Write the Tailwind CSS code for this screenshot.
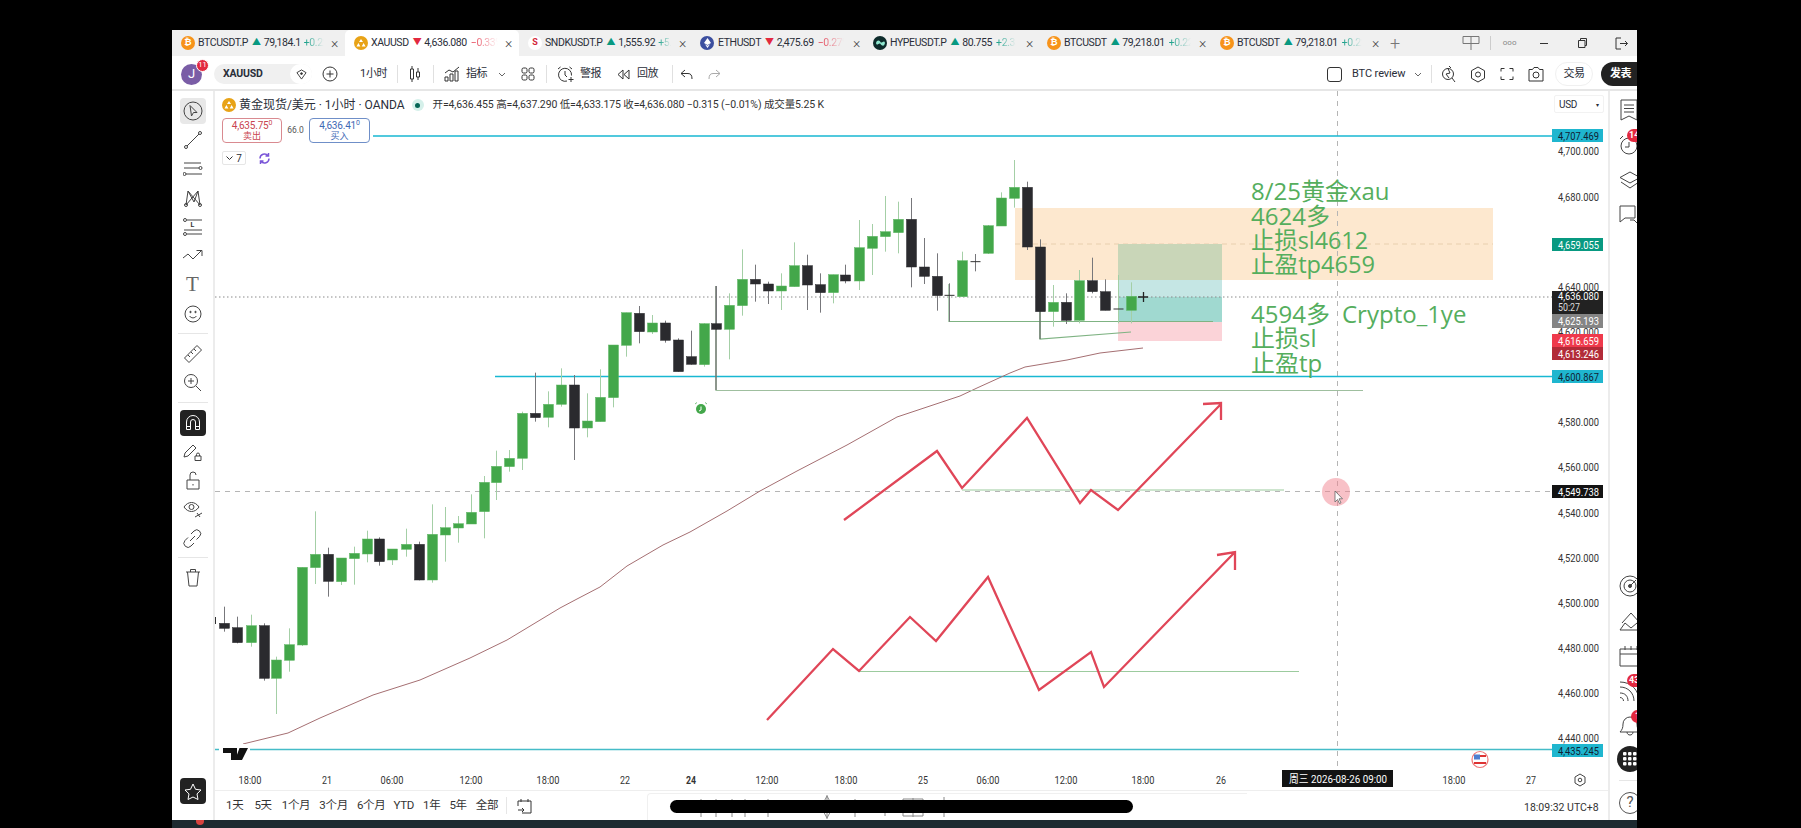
<!DOCTYPE html>
<html lang="en">
<head>
    <meta charset="UTF-8">
    <title>XAUUSD 4,636.080</title>
    <script src="https://cdn.jsdelivr.net/npm/@tailwindcss/browser@4"></script>
</head>
<body class="bg-black w-[1801px] h-[828px] overflow-hidden font-['Roboto','Noto_Sans_CJK_SC',sans-serif] text-[#2a2e39]">
<div class="ml-[172px] mt-[30px] w-[1465px] h-[798px] overflow-hidden flex flex-col bg-white">

    <!-- tabs -->
    <div class="h-[26px] shrink-0 flex items-center bg-[#f0f0f0] text-[10.5px] tracking-[-0.4px] whitespace-nowrap">
        <div class="w-[173px] h-full flex items-center pl-[9px]">
            <span class="w-[14px] h-[14px] rounded-full bg-[#f7931a] text-white text-[9px] font-bold flex items-center justify-center tracking-normal">₿</span>
            <span class="ml-[3px]">BTCUSDT.P</span>
            <span class="ml-[4px] text-[#089981] text-[9px]">▲</span>
            <span class="ml-[3px]">79,184.1</span>
            <span class="ml-[3px] w-[20px] overflow-hidden bg-linear-to-r from-[#089981] to-transparent bg-clip-text text-transparent">+0.22%</span>
            <span class="ml-auto mr-[7px] text-[14px] font-light text-[#444]">×</span>
        </div>
        <div class="w-[174px] h-full flex items-center pl-[9px] bg-white rounded-t-[5px]">
            <span class="w-[14px] h-[14px] rounded-full bg-[#e8a317] flex items-center justify-center"><svg width="10" height="8" viewBox="0 0 10 8" fill="#fff"><path d="M5 0l2 3H3zM2.400 4l2 3.400H0.500zM7.600 4l2 3.400H5.700z"/></svg></span>
            <span class="ml-[3px]">XAUUSD</span>
            <span class="ml-[4px] text-[#e2293f] text-[9px]">▼</span>
            <span class="ml-[3px]">4,636.080</span>
            <span class="ml-[4px] w-[27px] overflow-hidden bg-linear-to-r from-[#e2293f] to-transparent bg-clip-text text-transparent">−0.33%</span>
            <span class="ml-auto mr-[7px] text-[14px] font-light text-[#444]">×</span>
        </div>
        <div class="w-[174px] h-full flex items-center pl-[9px]">
            <span class="w-[14px] h-[14px] rounded-full bg-white text-[#d3263a] text-[9px] font-bold flex items-center justify-center tracking-normal">S</span>
            <span class="ml-[3px]">SNDKUSDT.P</span>
            <span class="ml-[4px] text-[#089981] text-[9px]">▲</span>
            <span class="ml-[3px]">1,555.92</span>
            <span class="ml-[3px] w-[13px] overflow-hidden bg-linear-to-r from-[#089981] to-transparent bg-clip-text text-transparent">+5.1%</span>
            <span class="ml-auto mr-[7px] text-[14px] font-light text-[#444]">×</span>
        </div>
        <div class="w-[174px] h-full flex items-center pl-[7px]">
            <span class="w-[14px] h-[14px] rounded-full bg-[#3c4f9f] flex items-center justify-center"><svg width="7" height="10" viewBox="0 0 7 10" fill="#fff"><path d="M3.500 0L7 5 3.500 7 0 5zM3.500 7.800L6 6.300 3.500 10 1 6.300z"/></svg></span>
            <span class="ml-[4px]">ETHUSDT</span>
            <span class="ml-[4px] text-[#e2293f] text-[9px]">▼</span>
            <span class="ml-[3px]">2,475.69</span>
            <span class="ml-[4px] w-[26px] overflow-hidden bg-linear-to-r from-[#e2293f] to-transparent bg-clip-text text-transparent">−0.27%</span>
            <span class="ml-auto mr-[7px] text-[14px] font-light text-[#444]">×</span>
        </div>
        <div class="w-[173px] h-full flex items-center pl-[6px]">
            <span class="w-[14px] h-[14px] rounded-full bg-[#0d2b2b] flex items-center justify-center"><svg width="9" height="6" viewBox="0 0 9 6" fill="#8fe8d0"><path d="M0 3c1-3 3-3 4.500-1S8-1 9 3C8 7 6 6 4.500 4S1 7 0 3z"/></svg></span>
            <span class="ml-[3px]">HYPEUSDT.P</span>
            <span class="ml-[4px] text-[#089981] text-[9px]">▲</span>
            <span class="ml-[3px]">80.755</span>
            <span class="ml-[4px] w-[20px] overflow-hidden bg-linear-to-r from-[#089981] to-transparent bg-clip-text text-transparent">+2.35%</span>
            <span class="ml-auto mr-[7px] text-[14px] font-light text-[#444]">×</span>
        </div>
        <div class="w-[173px] h-full flex items-center pl-[7px]">
            <span class="w-[14px] h-[14px] rounded-full bg-[#f7931a] text-white text-[9px] font-bold flex items-center justify-center tracking-normal">₿</span>
            <span class="ml-[3px]">BTCUSDT</span>
            <span class="ml-[4px] text-[#089981] text-[9px]">▲</span>
            <span class="ml-[3px]">79,218.01</span>
            <span class="ml-[4px] w-[22px] overflow-hidden bg-linear-to-r from-[#089981] to-transparent bg-clip-text text-transparent">+0.22%</span>
            <span class="ml-auto mr-[7px] text-[14px] font-light text-[#444]">×</span>
        </div>
        <div class="w-[173px] h-full flex items-center pl-[7px]">
            <span class="w-[14px] h-[14px] rounded-full bg-[#f7931a] text-white text-[9px] font-bold flex items-center justify-center tracking-normal">₿</span>
            <span class="ml-[3px]">BTCUSDT</span>
            <span class="ml-[4px] text-[#089981] text-[9px]">▲</span>
            <span class="ml-[3px]">79,218.01</span>
            <span class="ml-[4px] w-[20px] overflow-hidden bg-linear-to-r from-[#089981] to-transparent bg-clip-text text-transparent">+0.22%</span>
            <span class="ml-auto mr-[7px] text-[14px] font-light text-[#444]">×</span>
        </div>
        <span class="ml-[4px] text-[18px] font-light text-[#777]">+</span>
        <svg class="ml-[62px]" width="18" height="16" viewBox="0 0 18 16" fill="none" stroke="#777"><path d="M1 1.500h16v7H1zM9 1.500V15"/></svg>
        <span class="ml-[10px] w-px h-[14px] bg-[#ccc]"></span>
        <span class="ml-[12px] text-[8px] text-[#888] tracking-normal">ooo</span>
        <span class="ml-[24px] w-[8px] h-px bg-[#333]"></span>
        <svg class="ml-[29px]" width="10" height="10" viewBox="0 0 10 10" fill="none" stroke="#333"><path d="M1.500 2.500h6.500v7H1.500zM3.500 2.500V.5H9.500v7H8"/></svg>
        <svg class="ml-[28px]" width="13" height="13" viewBox="0 0 13 13" fill="none" stroke="#333"><path d="M6 1H1v11h5M5 6.500h7.500M10 4l2.500 2.500L10 9"/></svg>
    </div>

    <!-- top toolbar -->
    <div class="h-[35px] w-[1465px] pt-[3px] shrink-0 flex items-center text-[11px] border-b-[2px] border-[#e6e6e6] whitespace-nowrap [&>*]:shrink-0">
        <div class="relative ml-[9px] w-[21px] h-[21px] rounded-full bg-[#7a5da6] text-white text-[13px] flex items-center justify-center">J
            <span class="absolute -top-[5px] -right-[7px] w-[13px] h-[13px] rounded-full bg-[#e2293f] border border-white text-[7.500px] flex items-center justify-center">11</span>
        </div>
        <div class="ml-[12px] w-[98px] h-[20px] rounded-full bg-[#f0f0f0] flex items-center pl-[9px] font-bold text-[10.5px] tracking-[-0.2px]">XAUUSD
            <span class="ml-auto w-[22px] h-[20px] rounded-full bg-white flex items-center justify-center"><svg width="11" height="11" viewBox="0 0 12 12" fill="none" stroke="#333"><path d="M1 4l5-3 5 3-5 7z"/><circle cx="6" cy="5" r="1" fill="#333"/></svg></span>
        </div>
        <svg class="ml-[10px]" width="16" height="16" viewBox="0 0 16 16" fill="none" stroke="#333"><circle cx="8" cy="8" r="7"/><path d="M8 4.500v7M4.500 8h7"/></svg>
        <span class="ml-[22px] w-[25px] tracking-[-0.3px]">1小时</span>
        <span class="ml-[12px] w-px h-[18px] bg-[#e0e0e0]"></span>
        <svg class="ml-[11px]" width="12" height="16" viewBox="0 0 12 16" fill="none" stroke="#333"><path d="M3 0v3M3 13v3M9 2v4M9 11v3M1.500 3h3v10h-3zM7.500 6h3v5h-3z"/></svg>
        <span class="ml-[12px] w-px h-[18px] bg-[#e0e0e0]"></span>
        <svg class="ml-[10px]" width="16" height="16" viewBox="0 0 16 16" fill="none" stroke="#333"><path d="M1 15v-4h3v4zM6 15V8h3v7zM11 15V5h3v10zM1 7l4-3 4 2 6-5"/></svg>
        <span class="ml-[6px] w-[21px] tracking-[-0.5px]">指标</span>
        <svg class="ml-[11px]" width="8" height="5" viewBox="0 0 8 5" fill="none" stroke="#666"><path d="M1 1l3 3 3-3"/></svg>
        <svg class="ml-[15px]" width="14" height="14" viewBox="0 0 14 14" fill="none" stroke="#333"><rect x="1" y="1" width="5" height="5" rx="1.500"/><rect x="8" y="1" width="5" height="5" rx="1.500"/><rect x="1" y="8" width="5" height="5" rx="1.500"/><rect x="8" y="8" width="5" height="5" rx="1.500"/></svg>
        <span class="ml-[11px] w-px h-[18px] bg-[#e0e0e0]"></span>
        <svg class="ml-[10px]" width="17" height="17" viewBox="0 0 17 17" fill="none" stroke="#333"><path d="M10 15A6.500 6.500 0 1 1 14.500 9.500M8 5v4l2 2M1 3l2.500-2M15 3l-2.500-2M14 11v5M11.500 13.500h5"/></svg>
        <span class="ml-[6px] w-[21px] tracking-[-0.5px]">警报</span>
        <svg class="ml-[16px]" width="13" height="11" viewBox="0 0 13 11" fill="none" stroke="#333"><path d="M6 1L1 5.500 6 10zM12 1L7 5.500l5 4.500z"/></svg>
        <span class="ml-[7px] w-[21px] tracking-[-0.5px]">回放</span>
        <span class="ml-[14px] w-px h-[18px] bg-[#e0e0e0]"></span>
        <svg class="ml-[7px]" width="13" height="11" viewBox="0 0 13 11" fill="none" stroke="#333"><path d="M5 1L1 4.500 5 8M1 4.500h7c3 0 4 2 4 5.500"/></svg>
        <svg class="ml-[15px]" width="13" height="11" viewBox="0 0 13 11" fill="none" stroke="#aaa"><path d="M8 1l4 3.500L8 8M12 4.500H5c-3 0-4 2-4 5.500"/></svg>

        <span class="ml-auto w-[15px] h-[15px] rounded-[3px] border border-[#333]"></span>
        <span class="ml-[10px] w-[53px] tracking-[-0.1px]">BTC review</span>
        <svg class="ml-[9px]" width="8" height="5" viewBox="0 0 8 5" fill="none" stroke="#666"><path d="M1 1l3 3 3-3"/></svg>
        <span class="ml-[9px] w-px h-[18px] bg-[#e0e0e0]"></span>
        <svg class="ml-[9px]" width="16" height="18" viewBox="0 0 16 18" fill="none" stroke="#333"><circle cx="7" cy="9" r="5.500"/><path d="M7 3.500L9 8 5 9l3 4M11 13l3 4M8 1l2 2"/></svg>
        <svg class="ml-[13px]" width="16" height="17" viewBox="0 0 16 17" fill="none" stroke="#333"><path d="M8 1l6.500 3.700v7.600L8 16l-6.500-3.700V4.700z"/><circle cx="8" cy="8.500" r="2.500"/></svg>
        <svg class="ml-[14px]" width="14" height="14" viewBox="0 0 14 14" fill="none" stroke="#333"><path d="M1 4.500V1.500h3.500M9.500 1.500H13v3M13 9.500v3H9.500M4.500 12.500H1v-3"/></svg>
        <svg class="ml-[14px]" width="16" height="16" viewBox="0 0 16 16" fill="none" stroke="#333"><path d="M1 3.500h3.500L6 1.500h4l1.500 2H15V15H1z"/><circle cx="8" cy="9" r="3"/></svg>
        <span class="ml-[11px] w-[38px] h-[24px] rounded-full border border-[#f0f0f0] flex items-center justify-center tracking-[-0.5px]">交易</span>
        <span class="ml-[8px] w-[36px] h-[24px] rounded-l-full bg-[#222] text-white font-bold flex items-center pl-[9px] tracking-[-0.5px]">发表</span>
    </div>

    <!-- main row -->
    <div class="flex flex-1 w-[1474px] min-h-0">
        <!-- left drawing tools -->
        <div class="w-[43px] shrink-0 flex flex-col items-center pt-[5px] pb-[16px] border-r-[2px] border-[#ececec] text-[#333]">
            <div class="w-[26px] h-[26px] my-[1.500px] rounded-[4px] bg-[#e8e8e8] flex items-center justify-center"><svg width="20" height="20" viewBox="0 0 20 20" fill="none" stroke="#444"><circle cx="10" cy="10" r="9"/><path d="M7 4.500l7 7-3.500 0 -2 3.500z"/></svg></div>
            <div class="h-[29px] flex items-center"><svg width="20" height="20" viewBox="0 0 20 20" fill="none" stroke="#444"><path d="M4 16L16 4"/><circle cx="3" cy="17" r="1.500"/><circle cx="17" cy="3" r="1.500"/></svg></div>
            <div class="h-[29px] flex items-center"><svg width="20" height="16" viewBox="0 0 20 16" fill="none" stroke="#444"><path d="M1 2h17M1 7h15M3 13h16"/><circle cx="17.500" cy="7" r="1.500"/><circle cx="1.500" cy="13" r="1.500"/></svg></div>
            <div class="h-[29px] flex items-center"><svg width="20" height="20" viewBox="0 0 20 20" fill="none" stroke="#444"><path d="M3 17L5 3l6 11 4-11 2 14M3 17L15 3M5 3l12 14"/><circle cx="3" cy="17" r="1.500"/><circle cx="17" cy="17" r="1.500"/></svg></div>
            <div class="h-[29px] relative flex items-center"><svg width="20" height="18" viewBox="0 0 20 18" fill="none" stroke="#444"><path d="M4 2h15M1 12h18M4 16h15"/><circle cx="2" cy="2" r="1.500"/><circle cx="2" cy="16" r="1.500"/></svg><span class="absolute left-[8px] top-[8px] text-[7px] font-bold">L</span></div>
            <div class="h-[29px] flex items-center"><svg width="21" height="14" viewBox="0 0 21 14" fill="none" stroke="#444"><path d="M1 9l5-4 5 5 8-8M14.500 1.500H20V7"/></svg></div>
            <div class="h-[29px] flex items-center font-['Liberation_Serif',serif] text-[21px] text-[#666]">T</div>
            <div class="h-[29px] flex items-center"><svg width="18" height="18" viewBox="0 0 18 18" fill="none" stroke="#444"><circle cx="9" cy="9" r="8"/><circle cx="6.500" cy="7" r=".7" fill="#444"/><circle cx="11.500" cy="7" r=".7" fill="#444"/><path d="M5.500 11c2 2.500 5 2.500 7 0"/></svg></div>
            <div class="my-[5px] w-[30px] h-px bg-[#e6e6e6]"></div>
            <div class="h-[29px] flex items-center"><svg width="20" height="20" viewBox="0 0 20 20" fill="none" stroke="#444"><path d="M1.500 14L14 1.500l4.500 4.500L6 18.500zM5 11l2 2M8 8l2 2M11 5l2 2"/></svg></div>
            <div class="h-[29px] flex items-center"><svg width="19" height="19" viewBox="0 0 19 19" fill="none" stroke="#444"><circle cx="8" cy="8" r="6.500"/><path d="M13 13l5 5M8 5v6M5 8h6"/></svg></div>
            <div class="my-[5px] w-[30px] h-px bg-[#e6e6e6]"></div>
            <div class="w-[26px] h-[26px] my-[1.500px] rounded-[4px] bg-[#222] flex items-center justify-center"><svg width="16" height="17" viewBox="0 0 16 17" fill="none" stroke="#fff"><path d="M1.500 15.500V8a6.500 6.500 0 0 1 13 0v7.500h-4V8a2.500 2.500 0 0 0-5 0v7.500zM1.500 12.500h4M10.500 12.500h4"/></svg></div>
            <div class="h-[29px] flex items-center"><svg width="20" height="20" viewBox="0 0 20 20" fill="none" stroke="#444"><path d="M2 11L10 3l3 3-8 8-4 1zM12 17v-3h6v4.500h-6zM13.500 14v-1.500a1.500 1.500 0 0 1 3 0V14"/></svg></div>
            <div class="h-[29px] flex items-center"><svg width="16" height="20" viewBox="0 0 16 20" fill="none" stroke="#444"><path d="M2 9h12v9H2zM5 9V4a3 3 0 0 1 6 0M8 13v1.500"/></svg></div>
            <div class="h-[29px] flex items-center"><svg width="20" height="20" viewBox="0 0 20 20" fill="none" stroke="#444"><path d="M1 7c4-6 11-6 15 0-4 6-11 6-15 0z"/><circle cx="8.500" cy="7" r="2.500"/><path d="M12 17l7-4M14 13l3 4"/></svg></div>
            <div class="h-[29px] flex items-center"><svg width="19" height="19" viewBox="0 0 19 19" fill="none" stroke="#444"><path d="M8 5l3-3a3.500 3.500 0 0 1 5.500 5.500l-3 3M11 14l-3 3A3.500 3.500 0 0 1 2 11.500l3-3M7 12l5-5"/></svg></div>
            <div class="mt-[4px] mb-[5px] w-[30px] h-px bg-[#e6e6e6]"></div>
            <div class="h-[29px] flex items-center"><svg width="16" height="19" viewBox="0 0 16 19" fill="none" stroke="#444"><path d="M1 4h14M5.500 4V1.500h5V4M2.500 4l1.500 14h8l1.500-14"/></svg></div>
            <div class="mt-auto w-[26px] h-[26px] rounded-[4px] bg-[#222] flex items-center justify-center"><svg width="18" height="17" viewBox="0 0 18 17" fill="none" stroke="#fff"><path d="M9 1l2.500 5.300 5.500.7-4 3.900 1 5.600L9 14l-5 2.500 1-5.600-4-3.900 5.500-.7z"/></svg></div>
        </div>

        <!-- chart column -->
        <div class="flex-1 min-w-0 flex flex-col">
            <div class="relative h-[700px] shrink-0 border-b border-[#eeeeee]">
                <svg id="chart" width="1391" height="700" viewBox="215 91 1391 700" class="block">
                    <!-- zones, lower layer -->
                    <rect x="1015" y="208" width="478" height="72" fill="#fde8cf"/>
                    <path d="M1015 244H1493" stroke="#e8cfae" stroke-dasharray="5 4"/>
                    <rect x="1118" y="244" width="104" height="36" fill="#c9d6b8"/>
                    <rect x="1118" y="280" width="104" height="17" fill="#c5e6e4"/>
                    <rect x="1118" y="297" width="104" height="25" fill="#a0d9d0"/>
                    <rect x="1118" y="322" width="104" height="19" fill="#fbd3d8"/>
                    <!-- level lines -->
                    <path d="M215 297H1552" stroke="#8a8a8a" stroke-dasharray="1.500 2.500"/>
                    <path d="M215 491.500H1552" stroke="#b5b5b5" stroke-dasharray="5 5"/>
                    <path d="M1337.500 91V770" stroke="#b5b5b5" stroke-dasharray="5 5"/>
                    <path d="M373 136H1552M495 376.500H1552" stroke="#18b8d2" stroke-width="1.700"/>
                    <path d="M215 749.500H1552" stroke="#45bcc8" stroke-width="1.700"/>
                    <!-- moving average -->
                    <path d="M243 744L288 733L320 718L373 695L420 680L470 658L507 640L560 608L577 599L600 587L627 566L663 545L690 532L727 511L760 491L797 471L847 445L897 417L927 407L960 396L977 388L1010 373L1025 367L1067 360L1100 353L1143 348" fill="none" stroke="#a56f72" stroke-width="1" stroke-linejoin="round"/>
                    <!-- trend lines -->
                    <path d="M716 286V390.500H1363" fill="none" stroke="#9fbf9f" stroke-width="1.200"/>
                    <path d="M716 286V390" stroke="#555"/>
                    <path d="M949 284V321.500H1213" fill="none" stroke="#7fb383" stroke-width="1.200"/>
                    <path d="M1040 300V339L1131 332" fill="none" stroke="#7fb383" stroke-width="1.200"/>
                    <path d="M1040 300V339" stroke="#555"/>
                    <path d="M962 490H1284M859 671.500H1299" stroke="#9ccb9e" stroke-width="1.200"/>
                    <path d="M215.500 617v7" stroke="#333"/>
                    <g id="candles"></g>
                    <!-- hand drawn red zigzags -->
                    <path d="M844 520L937 451L962 488L1027 418L1080 503L1091 490L1118 510L1221 404M1203 404L1221 403V420" fill="none" stroke="#e04658" stroke-width="2.300"/>
                    <path d="M767 720L833 649L859 671L910 617L936 641L988 577L1039 690L1091 652L1104 687L1235 552M1217 555L1235 552V570" fill="none" stroke="#e04658" stroke-width="2.300"/>
                    <!-- notes -->
                    <g fill="#55ae5d" font-size="24" font-family="'Open Sans','Noto Sans CJK SC',sans-serif">
                        <text x="1251" y="200">8/25黄金xau</text>
                        <text x="1251" y="225">4624多</text>
                        <text x="1251" y="249" textLength="117" lengthAdjust="spacingAndGlyphs">止损sl4612</text>
                        <text x="1251" y="273" textLength="124" lengthAdjust="spacingAndGlyphs">止盈tp4659</text>
                        <text x="1251" y="323">4594多</text>
                        <text x="1342" y="323">Crypto_1ye</text>
                        <text x="1251" y="347">止损sl</text>
                        <text x="1251" y="372">止盈tp</text>
                    </g>
                    <!-- alert marker -->
                    <circle cx="701" cy="409" r="5" fill="#43a74a"/>
                    <path d="M701 406.500V410L699 411" fill="none" stroke="#fff"/>
                    <path d="M695 404l2-1.500M707 404l-2-1.500" stroke="#7cc082"/>
                    <!-- logo -->
                    <rect x="219" y="744" width="31" height="17" fill="#fff"/>
                    <path d="M223 748H237V760H231V753H223zM239.500 748H248L242 760H235z" fill="#111"/>
                    <!-- us flag event -->
                    <circle cx="1480" cy="759.500" r="8" fill="#fff" stroke="#e77" stroke-width="1.200"/>
                    <path d="M1474 756h12M1474 763h12" stroke="#d33" stroke-width="2"/>
                    <rect x="1474" y="754.500" width="6" height="5" fill="#4f7fd0"/>
                    <!-- axis labels -->
                    <g id="axis"></g>
                    <!-- pointer -->
                    <circle cx="1336" cy="492" r="14" fill="#f2838f" fill-opacity=".5"/>
                    <path d="M1335 491v11l2.500-2.500 2 4 1.500-.7-2-4h3.500z" fill="#fff" stroke="#666" stroke-width=".8"/>
                </svg>
                <div class="absolute left-[7px] top-[7px] flex items-center h-[14px]">
                    <span class="w-[14px] h-[14px] rounded-full bg-[#e8a317] flex items-center justify-center"><svg width="10" height="8" viewBox="0 0 10 8" fill="#fff"><path d="M5 0l2 3H3zM2.400 4l2 3.400H0.500zM7.600 4l2 3.400H5.700z"/></svg></span>
                    <span class="ml-[3px] text-[12px] tracking-[-0.02px]">黄金现货/美元 · 1小时 · OANDA</span>
                    <span class="ml-[7px] w-[12px] h-[12px] rounded-full bg-[#d5f0ea] flex items-center justify-center"><span class="w-[5px] h-[5px] rounded-full bg-[#056656]"></span></span>
                    <span class="ml-[9px] text-[10.5px] tracking-[-0.12px] text-[#333] whitespace-nowrap">开=4,636.455 高=4,637.290 低=4,633.175 收=4,636.080 −0.315 (−0.01%) 成交量5.25 K</span>
                </div>
                <div class="absolute left-[7px] top-[27px] flex items-center">
                    <div class="w-[60px] h-[25px] rounded-[4px] border border-[#d98a90] bg-white flex flex-col items-center justify-center text-[#c9444f] leading-[11px]">
                        <span class="text-[10px] tracking-[-0.2px]">4,635.75<sup class="text-[7px]">0</sup></span>
                        <span class="text-[9px]">卖出</span>
                    </div>
                    <span class="w-[27px] text-center text-[8.500px] text-[#555]">66.0</span>
                    <div class="w-[61px] h-[25px] rounded-[4px] border border-[#6f8fc8] bg-white flex flex-col items-center justify-center text-[#3f69b5] leading-[11px]">
                        <span class="text-[10px] tracking-[-0.2px]">4,636.41<sup class="text-[7px]">0</sup></span>
                        <span class="text-[9px]">买入</span>
                    </div>
                </div>
                <div class="absolute left-[7px] top-[60px] flex items-center">
                    <span class="w-[24px] h-[14px] rounded-[2px] border border-[#e6e6e6] flex items-center justify-center gap-[3px] text-[10px]"><svg width="7" height="4" viewBox="0 0 7 4" fill="none" stroke="#333"><path d="M.5.5l3 3 3-3"/></svg>7</span>
                    <svg class="ml-[12px]" width="13" height="13" viewBox="0 0 13 13" fill="none" stroke="#7a55d8"><path d="M2 6.500a4.500 4.500 0 0 1 8-2.800M11 6.500a4.500 4.500 0 0 1-8 2.800M10.500 1v3h-3M2.500 12V9h3" stroke-width="1.500"/></svg>
                </div>
                <div class="absolute left-[1339px] top-[4px] w-[50px] h-[18px] rounded-[2px] border border-[#f2f2f2] flex items-center pl-[4px] text-[10px] tracking-[-0.3px]">USD<span class="ml-auto mr-[4px] text-[6px]">▾</span></div>
            </div>
            <!-- range bar -->
            <div class="relative flex-1 flex items-center text-[11.500px] text-[#333] tracking-[-0.3px]">
                <span class="ml-[11px]">1天</span>
                <span class="ml-[11px]">5天</span>
                <span class="ml-[10px]">1个月</span>
                <span class="ml-[9px]">3个月</span>
                <span class="ml-[9px]">6个月</span>
                <span class="ml-[8px]">YTD</span>
                <span class="ml-[9px]">1年</span>
                <span class="ml-[9px]">5年</span>
                <span class="ml-[9px]">全部</span>
                <span class="ml-[8px] w-px h-[17px] bg-[#e6e6e6]"></span>
                <svg class="ml-[10px]" width="15" height="16" viewBox="0 0 15 16" fill="none" stroke="#333"><path d="M1 8V3h13v12H5M4 1v3M11 1v3M1 12h6M5 10l2 2-2 2"/></svg>
                <div class="absolute left-[432px] top-[2px] w-[600px] h-[27px] rounded-tl-[4px] border-l border-t border-[#f0f0f0]">
                    <svg width="600" height="27" viewBox="0 0 600 27" fill="none" stroke="#888">
                        <path d="M53 5v18M68 5v18M84 5v18M97 5v18M120 5v18M179 1v24M207 5v18M237 6v16M265 4v19M296 3v20"/>
                        <path d="M173 13l6-11 6 11-6 11zM255 5h20v17h-20z"/>
                    </svg>
                </div>
                <div class="absolute left-[455px] top-[9px] w-[463px] h-[13px] rounded-full bg-black"></div>
                <span class="absolute left-[1309px] top-[9px] text-[10.5px] tracking-[0px] whitespace-nowrap">18:09:32 UTC+8</span>
            </div>
        </div>

        <!-- right widget bar -->
        <div class="w-[38px] shrink-0 flex flex-col items-start pl-[9px] border-l-[2px] border-[#ececec] text-[#444]">
            <div class="h-[35px] mt-[1px] flex items-center"><svg width="20" height="22" viewBox="0 0 20 22" fill="none" stroke="#444"><path d="M2 1h16v20l-8-4-8 4zM5 6h10M5 9.500h10M5 13h10"/></svg></div>
            <div class="relative h-[35px] flex items-center"><svg width="20" height="20" viewBox="0 0 20 20" fill="none" stroke="#444"><circle cx="10" cy="11" r="8"/><path d="M10 7v5H6M1 4l3-3"/></svg><span class="absolute left-[8px] top-[2px] w-[18px] h-[13px] rounded-full bg-[#e2293f] text-white text-[9px] font-bold pl-[2px] leading-[13px]">14</span></div>
            <div class="h-[35px] flex items-center"><svg width="22" height="18" viewBox="0 0 22 18" fill="none" stroke="#444"><path d="M11 1l10 5.500L11 12 1 6.500zM2 11l9 6 9-6"/></svg></div>
            <div class="h-[35px] flex items-center"><svg width="24" height="20" viewBox="0 0 24 20" fill="none" stroke="#444"><path d="M1 1h15v12H6l-5 4zM19 7h4v11h-5l-3-3h-4"/></svg></div>

            <div class="mt-auto h-[35px] flex items-center"><svg width="22" height="22" viewBox="0 0 22 22" fill="none" stroke="#444"><circle cx="11" cy="11" r="10"/><circle cx="11" cy="11" r="6"/><circle cx="11" cy="11" r="1.500" fill="#444"/><path d="M11 11l6-6"/></svg></div>
            <div class="h-[35px] flex items-center"><svg width="24" height="20" viewBox="0 0 24 20" fill="none" stroke="#444"><path d="M3 12l9-10 9 10M1 19l5-7 6 5 6-5 5 7z"/></svg></div>
            <div class="h-[35px] flex items-center"><svg width="24" height="22" viewBox="0 0 24 22" fill="none" stroke="#444"><path d="M1 4h22v17H1zM1 9h22M6 1v4M12 1v4M18 1v4"/></svg></div>
            <div class="relative h-[35px] flex items-center"><svg width="22" height="20" viewBox="0 0 22 20" fill="none" stroke="#444"><path d="M1 6c8 0 14 6 14 14M1 12c5 0 8 3 8 8M1 16.500c2 0 3.500 1.500 3.500 3.500M1 1c11 0 19 8 19 19"/></svg><span class="absolute left-[8px] top-[1px] w-[18px] h-[13px] rounded-full bg-[#e2293f] text-white text-[9px] font-bold pl-[2px] leading-[13px]">43</span></div>
            <div class="relative h-[35px] flex items-center"><svg width="22" height="20" viewBox="0 0 22 20" fill="none" stroke="#444"><path d="M1 16h20c-2-2-3-4-3-8a7 7 0 0 0-14 0c0 4-1 6-3 8zM8 16c0 4 6 4 6 0"/></svg><span class="absolute left-[12px] top-[2px] w-[14px] h-[13px] rounded-full bg-[#e2293f] text-white text-[9px] font-bold pl-[4px] leading-[13px]">1</span></div>
            <div class="-ml-[2px] h-[35px] -mt-[2px] flex items-center"><span class="w-[26px] h-[26px] rounded-full bg-[#222] flex items-center justify-center"><svg width="14" height="14" viewBox="0 0 14 14" fill="#fff"><rect width="3.500" height="3.500" rx="1"/><rect x="5" width="3.500" height="3.500" rx="1"/><rect x="10" width="3.500" height="3.500" rx="1"/><rect y="5" width="3.500" height="3.500" rx="1"/><rect x="5" y="5" width="3.500" height="3.500" rx="1"/><rect x="10" y="5" width="3.500" height="3.500" rx="1"/><rect y="10" width="3.500" height="3.500" rx="1"/><rect x="5" y="10" width="3.500" height="3.500" rx="1"/><rect x="10" y="10" width="3.500" height="3.500" rx="1"/></svg></span></div>
            <div class="mt-[4px] w-[26px] h-px bg-[#e6e6e6]"></div>
            <div class="h-[35px] mt-[4px] flex items-center"><span class="w-[22px] h-[22px] rounded-full border border-[#555] flex items-center justify-center text-[15px] text-[#555]">?</span></div>
        </div>
    </div>

    <!-- taskbar strip -->
    <div class="relative h-[8px] shrink-0 bg-[#1d2a30]">
        <span class="absolute left-[24px] top-0 w-[8px] h-[5px] rounded-b-full bg-[#d8433f]"></span>
    </div>
</div>

<script>
    // candles read off the chart: [x, wick top, body top, body bottom, wick bottom, up?]
    const NS = "http://www.w3.org/2000/svg";
    const left = [[43,500,550,565,575,0],[82,530,563,608,610,0],[122,524,557,608,620,1],[161,550,557,715,722,0],[197,650,660,715,822,1],[237,565,614,661,695,1],[276,382,382,615,618,1],[315,214,343,383,432,1],[354,323,343,424,470,0],[393,354,354,425,435,1],[432,320,340,356,434,1],[471,272,297,342,367,1],[508,292,297,365,377,0],[547,327,327,360,375,1],[587,266,313,328,350,1],[626,305,313,420,421,0],[665,193,283,420,428,1],[704,201,263,285,365,1],[743,228,251,264,308,1],[782,163,217,252,252,1],[821,108,127,215,295,1],[858,32,79,128,180,1],[897,30,55,80,95,1]];
    const mid = [[936,785,790,925,960,1],[975,668,790,803,815,0],[1014,724,763,802,832,1],[1053,655,705,763,770,1],[1092,675,705,834,930,0],[1131,730,813,834,862,1],[1171,658,742,815,815,1],[1208,585,585,743,772,1],[1247,488,488,586,620,1],[1286,468,490,545,580,0],[1325,495,519,546,552,1],[1364,512,519,571,578,0],[1403,565,570,665,665,0],[1442,542,620,643,644,0],[1481,520,521,644,650,1]];
    const right = [[48,408,521,538,540,0],[87,430,466,538,628,1],[126,298,388,467,497,1],[165,344,388,402,455,0],[204,395,402,423,462,0],[243,370,408,423,480,1],[282,277,347,410,410,1],[321,314,347,405,480,0],[360,370,404,428,488,0],[398,374,374,428,460,1],[436,344,375,393,400,0],[476,210,293,393,420,1],[515,222,259,295,375,1],[554,138,245,260,305,1],[593,155,208,248,310,1],[632,144,208,351,412,0],[671,264,351,379,402,0],[710,310,379,437,482,0],[748,400,436,438,515,0],[787,305,332,440,440,1],[825,312,335,337,364,0],[865,225,227,310,312,1],[904,127,144,228,228,1],[943,30,112,145,173,1],[982,95,112,291,300,0],[1021,268,291,485,485,0],[1058,405,457,485,530,1],[1097,430,457,511,522,0],[1136,360,392,511,520,1],[1175,323,392,425,430,0],[1214,388,425,481,481,0],[1253,375,477,479,520,1],[1293,397,439,481,520,1]];

    function addEl(parent, name, attrs, text){
        let el = document.createElementNS(NS, name);
        Object.entries(attrs).forEach(([k, v]) => el.setAttribute(k, v));
        if(text) el.textContent = text;
        parent.append(el);
    }

    function drawCandles(list, ox, oy){
        let g = document.querySelector("#candles");
        list.forEach(([x, wt, bt, bb, wb, up]) => {
            let cx = Math.round(ox + x / 3) + .5;
            addEl(g, "path", {d: `M${cx} ${oy + wt / 3}V${oy + wb / 3}`, stroke: up ? "#a4cfa6" : "#77777b"});
            let h = Math.max((bb - bt) / 3, 1);
            if(h < 1.5){
                addEl(g, "path", {d: `M${cx - 5} ${oy + bt / 3}h10`, stroke: "#333"});
            } else {
                addEl(g, "rect", {x: cx - 5, y: oy + bt / 3, width: 10, height: h, fill: up ? "#43a74a" : "#2a2a2e", stroke: up ? "#5cb562" : "#2a2a2e", "stroke-width": .5});
            }
        });
    }
    drawCandles(left, 210, 440);
    drawCandles(mid, 210, 150);
    drawCandles(right, 700, 150);

    // last price cross
    addEl(document.querySelector("#candles"), "path", {d: "M1138 297h10M1143.500 292v10", stroke: "#222", "stroke-width": 1.3});

    const axis = document.querySelector("#axis");
    const font = "Roboto, 'Noto Sans CJK SC', sans-serif";
    function label(x, y, text, width, fill, size, extra){
        addEl(axis, "text", Object.assign({x, y, fill, "font-size": size || 11, "font-family": font, textLength: width, lengthAdjust: "spacingAndGlyphs"}, extra || {}), text);
    }

    // price scale
    [["4,700.000",151],["4,680.000",196.7],["4,640.000",287],["4,620.000",332],["4,580.000",422],["4,560.000",467],["4,540.000",512.5],["4,520.000",557.500],["4,500.000",603],["4,480.000",648],["4,460.000",693],["4,440.000",738]].forEach(([t, y]) => label(1558, y + 4, t, 41, "#333"));

    // coloured price tags: [text, top, height, background, text colour]
    [["4,707.469",129,13,"#1fb6cf","#123"],["4,659.055",238,13,"#089981","#fff"],["4,625.193",314,14,"#858585","#fff"],["4,616.659",334,13,"#ef3a4c","#fff"],["4,613.246",347,13,"#b22b38","#fff"],["4,600.867",370,13,"#1fb6cf","#123"],["4,549.738",485,13,"#131313","#fff"],["4,435.245",744,13,"#1fb6cf","#123"]].forEach(([t, y, h, bg, c]) => {
        addEl(axis, "rect", {x: 1552, y, width: 51, height: h, fill: bg});
        label(1558, y + h / 2 + 4, t, 41, c);
    });
    addEl(axis, "rect", {x: 1552, y: 291, width: 51, height: 23, fill: "#222"});
    label(1558, 300, "4,636.080", 41, "#fff");
    label(1558, 311, "50:27", 22, "#ddd");

    // time scale
    [["18:00",250],["21",327],["06:00",392],["12:00",471],["18:00",548],["22",625],["24",691,1],["12:00",767],["18:00",846],["25",923],["06:00",988],["12:00",1066],["18:00",1143],["26",1221],["18:00",1454],["27",1531]].forEach(([t, x, bold]) => {
        let w = t.length > 2 ? 23 : 10;
        label(x - w / 2, 784, t, w, "#333", 11, bold ? {"font-weight": 700} : {});
    });
    addEl(axis, "rect", {x: 1282, y: 770, width: 111, height: 17, fill: "#131313"});
    label(1289, 783, "周三 2026-08-26  09:00", 98, "#fff");
    addEl(axis, "path", {d: "M1580 774l5 3v6l-5 3-5-3v-6z", fill: "none", stroke: "#444"});
    addEl(axis, "circle", {cx: 1580, cy: 780, r: 1.8, fill: "none", stroke: "#444"});
</script>
</body>
</html>
